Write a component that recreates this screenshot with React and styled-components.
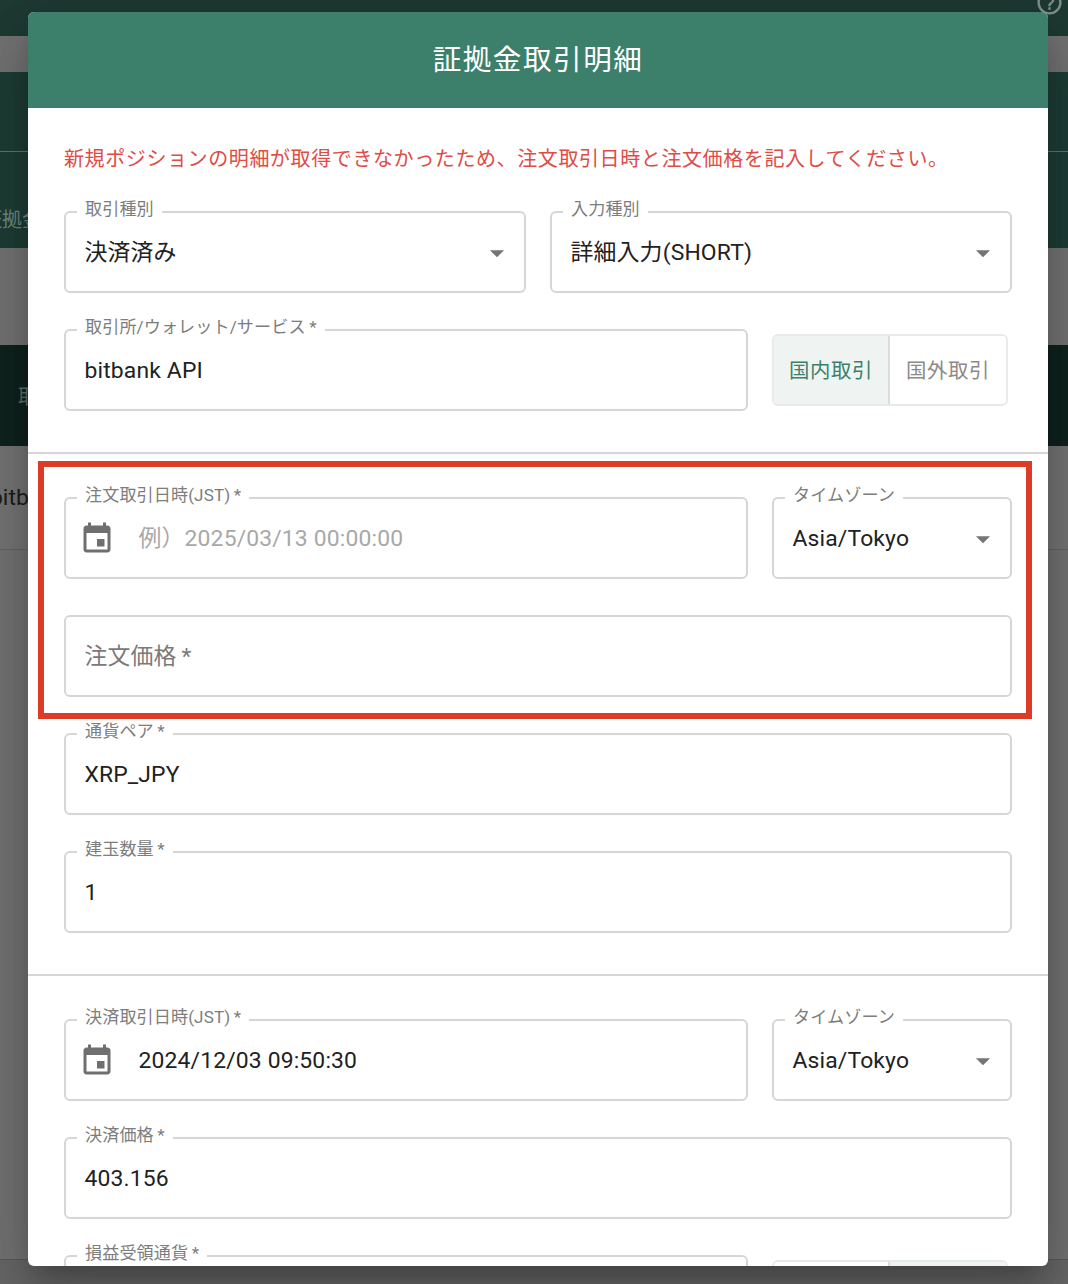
import React from 'react';
import styled, { createGlobalStyle } from 'styled-components';

const FONT = `Roboto, "Noto Sans CJK JP", sans-serif`;

const GlobalStyle = createGlobalStyle`
  html, body { margin: 0; padding: 0; background: #7a7a7a; }
  body { font-family: ${FONT}; }
`;

const Page = styled.div`
  position: relative;
  width: 1068px;
  height: 1284px;
  overflow: hidden;
  background: #7c7c7c;
`;

// dimmed page behind the dialog
const Band = styled.div`
  position: relative;
  height: ${(p) => p.h}px;
  background: ${(p) => p.bg};
  border-bottom: ${(p) => (p.line ? `1px solid ${p.line}` : 'none')};
  box-sizing: border-box;
  padding-top: ${(p) => p.shift || 0}px;
  display: flex;
  align-items: center;
  overflow: hidden;
  white-space: nowrap;
  font-size: ${(p) => p.size || 20}px;
  color: ${(p) => p.color || '#6e8a80'};
  text-indent: ${(p) => p.indent || 0}px;
`;

const HelpIcon = styled.svg`
  position: absolute;
  top: -12px;
  right: 4px;
  width: 29px;
  height: 29px;
  fill: #84908c;
`;

const Modal = styled.div`
  position: absolute;
  top: 12px;
  left: 28px;
  width: 1020px;
  height: 1254px;
  border-radius: 6px;
  overflow: hidden;
  background: #fff;
  display: flex;
  flex-direction: column;
  box-shadow: 0 16px 22px -10px rgba(0, 0, 0, 0.2), 0 34px 54px 4px rgba(0, 0, 0, 0.14),
    0 13px 66px 11px rgba(0, 0, 0, 0.12);
`;

const Header = styled.div`
  flex: 0 0 96px;
  box-sizing: border-box;
  padding-bottom: 6px;
  background: #3c806b;
  color: #fff;
  display: flex;
  align-items: center;
  justify-content: center;
  font-size: 28.6px;
  letter-spacing: 1.5px;
`;

const Section = styled.div`
  display: flex;
  flex-direction: column;
  gap: 36px;
  padding: ${(p) => p.top}px 36px 41px;
  border-bottom: ${(p) => (p.divider ? '2px solid #d6d6d6' : 'none')};
`;

const Message = styled.p`
  margin: 0 0 1px;
  font-size: 20px;
  line-height: 30px;
  letter-spacing: 0.6px;
  color: #e04b44;
`;

const Row = styled.div`
  display: grid;
  grid-template-columns: ${(p) => p.columns || '1fr'};
  column-gap: 24px;
`;

const Box = styled.fieldset`
  box-sizing: border-box;
  min-width: 0;
  height: 82px;
  margin: 0;
  padding: 0;
  border: 2px solid #d6d6d6;
  border-radius: 6px;
`;

const Legend = styled.legend`
  height: 2px;
  line-height: 2px;
  margin-left: 11px;
  padding: 0 8px;
  font-size: 17.1px;
  letter-spacing: 0.1px;
  color: #7d7d7d;
  white-space: nowrap;

  span {
    display: inline-block;
    transform: translateY(-3px);
  }
`;

const Content = styled.div`
  box-sizing: border-box;
  height: 78px;
  padding: 1px 19px 0 ${(p) => (p.$icon ? 12.5 : 18.5)}px;
  display: flex;
  align-items: center;
`;

const Value = styled.span`
  font-size: 22.9px;
  line-height: 28px;
  letter-spacing: 0.15px;
  color: ${(p) => (p.$muted ? '#a8a8a8' : p.$label ? '#7a7a7a' : '#212121')};
  white-space: nowrap;
`;

const EventIcon = styled.svg`
  flex: none;
  width: 36px;
  height: 36px;
  margin-right: 24px;
  fill: #6f6f6f;
`;

const Caret = styled.svg`
  flex: none;
  width: 34px;
  height: 34px;
  margin-left: auto;
  margin-right: -9px;
  fill: #757575;
`;

const Toggle = styled.div`
  align-self: center;
  box-sizing: border-box;
  width: 236px;
  height: 72px;
  display: grid;
  grid-template-columns: 1fr 1fr;
  border: 2px solid #e8eaea;
  border-radius: 6px;
  overflow: hidden;
`;

const ToggleItem = styled.div`
  display: flex;
  align-items: center;
  justify-content: center;
  padding-bottom: 3px;
  font-size: 20.4px;
  letter-spacing: 0.65px;
  color: ${(p) => (p.$active ? '#3c806b' : '#8a8a8a')};
  background: ${(p) => (p.$active ? '#eff4f2' : '#fff')};
  border-right: ${(p) => (p.$divide ? '2px solid #d8dcda' : 'none')};
`;

const Highlight = styled.div`
  position: absolute;
  top: 461px;
  left: 38px;
  width: 994px;
  height: 258px;
  box-sizing: border-box;
  border: 6px solid #dc3c26;
  pointer-events: none;
`;

const Field = ({ label, value, muted, date, select }) => (
  <Box>
    {label && (
      <Legend>
        <span>{label}</span>
      </Legend>
    )}
    <Content $icon={date}>
      {date && (
        <EventIcon viewBox="0 0 24 24">
          <path d="M17 12h-5v5h5v-5zM16 1v2H8V1H6v2H5c-1.11 0-1.99.9-1.99 2L3 19c0 1.1.89 2 2 2h14c1.1 0 2-.9 2-2V5c0-1.1-.9-2-2-2h-1V1h-2zm3 18H5V8h14v11z" />
        </EventIcon>
      )}
      <Value $muted={muted} $label={!label}>
        {value}
      </Value>
      {select && (
        <Caret viewBox="0 0 24 24">
          <path d="M7 10l5 5 5-5z" />
        </Caret>
      )}
    </Content>
  </Box>
);

const MarketToggle = ({ active }) => (
  <Toggle>
    <ToggleItem $active={active === 'domestic'} $divide>
      国内取引
    </ToggleItem>
    <ToggleItem $active={active === 'overseas'}>国外取引</ToggleItem>
  </Toggle>
);

const WIDE = '1fr 240px';
const REQ = '\u2009*';

export default function App() {
  return (
    <Page>
      <GlobalStyle />
      <Band h={36} bg="#1e3a33">
        <HelpIcon viewBox="0 0 24 24">
          <path d="M11 18h2v-2h-2v2zm1-16C6.48 2 2 6.48 2 12s4.48 10 10 10 10-4.48 10-10S17.52 2 12 2zm0 18c-4.41 0-8-3.59-8-8s3.59-8 8-8 8 3.59 8 8-3.59 8-8 8zm0-14c-2.21 0-4 1.79-4 4h2c0-1.1.9-2 2-2s2 .9 2 2c0 2-3 1.75-3 5h2c0-2.25 3-2.5 3-5 0-2.21-1.79-4-4-4z" />
        </HelpIcon>
      </Band>
      <Band h={36} bg="#737373" />
      <Band h={80} bg="#1d3d35" line="#5d7870" />
      <Band h={96} bg="#1d3d35" indent={-18} shift={36}>
        証拠金
      </Band>
      <Band h={97} bg="#747474" />
      <Band h={101} bg="#0f231e" indent={18} color="#5f6f6a">
        取引
      </Band>
      <Band h={104} bg="#757575" line="#666666" indent={-10} color="#1c1c1c" size={22.9}>
        bitbank API
      </Band>
      <Band h={710} bg="#737373" line="#5a5a5a" />
      <Band h={24} bg="#676767" />

      <Modal>
        <Header>証拠金取引明細</Header>
        <Section top={36} divider>
          <Message>新規ポジションの明細が取得できなかったため、注文取引日時と注文価格を記入してください。</Message>
          <Row columns="1fr 1fr">
            <Field label="取引種別" value="決済済み" select />
            <Field label="入力種別" value="詳細入力(SHORT)" select />
          </Row>
          <Row columns={WIDE}>
            <Field label={`取引所/ウォレット/サービス${REQ}`} value="bitbank API" />
            <MarketToggle active="domestic" />
          </Row>
        </Section>
        <Section top={43} divider>
          <Row columns={WIDE}>
            <Field label={`注文取引日時(JST)${REQ}`} value="例）2025/03/13 00:00:00" muted date />
            <Field label="タイムゾーン" value="Asia/Tokyo" select />
          </Row>
          <Field value={`注文価格${REQ}`} />
          <Field label={`通貨ペア${REQ}`} value="XRP_JPY" />
          <Field label={`建玉数量${REQ}`} value="1" />
        </Section>
        <Section top={43}>
          <Row columns={WIDE}>
            <Field label={`決済取引日時(JST)${REQ}`} value="2024/12/03 09:50:30" date />
            <Field label="タイムゾーン" value="Asia/Tokyo" select />
          </Row>
          <Field label={`決済価格${REQ}`} value="403.156" />
          <Row columns={WIDE}>
            <Field label={`損益受領通貨${REQ}`} value="" />
            <MarketToggle active="overseas" />
          </Row>
        </Section>
      </Modal>
      <Highlight />
    </Page>
  );
}
